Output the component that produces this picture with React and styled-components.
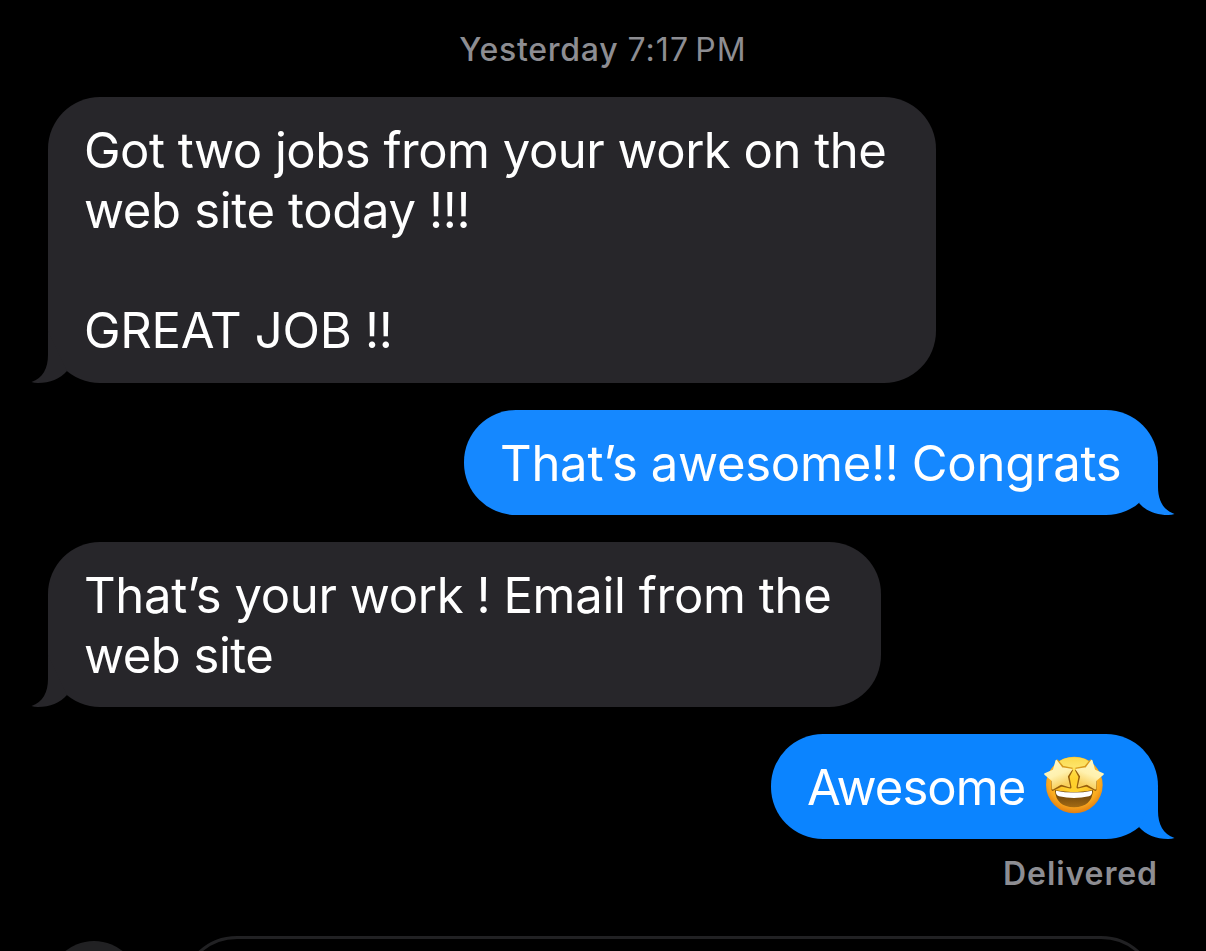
import React from 'react';
import styled, { createGlobalStyle, css } from 'styled-components';

const GlobalStyle = createGlobalStyle`
  * {
    box-sizing: border-box;
  }

  body {
    margin: 0;
    background: #000;
    font-family: Inter, "Liberation Sans", sans-serif;
  }
`;

const Screen = styled.div`
  display: flex;
  flex-direction: column;
  width: 1206px;
  height: 951px;
  padding: 30px 48px 0;
  overflow: hidden;
  background: #000;
`;

const Timestamp = styled.div`
  height: 40px;
  margin-bottom: 27px;
  color: #8d8d92;
  font-size: 32px;
  line-height: 40px;
  text-align: center;
  white-space: nowrap;
`;

const Day = styled.span`
  font-weight: 500;
  letter-spacing: 0.75px;
`;

const Time = styled.span`
  letter-spacing: 1.1px;
  word-spacing: -4px;
`;

const Thread = styled.div`
  display: flex;
  flex-direction: column;
  gap: 27px;
`;

const Bubble = styled.div`
  position: relative;
  flex: none;
  width: ${props => props.$width}px;
  height: ${props => props.$height}px;
  padding: 24px 36px 0;
  border-radius: 52px;
  color: #fff;
  background: ${props => props.$color};
  ${props => props.$sent && css`
    align-self: flex-end;
  `}
`;

const Line = styled.div`
  display: flex;
  align-items: center;
  height: 60px;
  font-size: 49px;
  line-height: 60px;
  letter-spacing: ${props => props.$spacing || 0}px;
  word-spacing: ${props => props.$wordSpacing || 0}px;
  white-space: pre;
`;

const TailShape = styled.svg`
  position: absolute;
  bottom: 0;
  width: 46px;
  height: 52px;
  ${props => (props.$sent ? 'right: -18px;' : 'left: -18px; transform: scaleX(-1);')}
`;

const Face = styled.svg`
  width: 60px;
  height: 60px;
  margin: -5px 0 0 19px;
`;

const Status = styled.div`
  align-self: flex-end;
  height: 40px;
  margin-top: 15px;
  color: #8d8d92;
  font-size: 32px;
  font-weight: 600;
  line-height: 40px;
  letter-spacing: 0.9px;
`;

const Composer = styled.div`
  display: flex;
  flex: none;
  align-items: flex-start;
  gap: 40px;
  margin-top: 42px;
`;

const AddButton = styled.div`
  width: 92px;
  height: 92px;
  margin-top: 5px;
  border-radius: 50%;
  background: #212123;
`;

const Field = styled.div`
  flex: 1;
  height: 114px;
  border: 3px solid #212123;
  border-radius: 57px;
`;

const Tail = ({ color, sent }) => (
  <TailShape $sent={sent} viewBox="0 0 46 52">
    <path fill={color} d="M28 0V24C28 37 33 47 44.5 51Q42 52 38 52C26 52 16 48 9 40Z" />
  </TailShape>
);

const Star = () => (
  <>
    <path
      d="M84 41L73 62L79 94L52 88L26 101L25 75"
      fill="none"
      stroke="#98600c"
      strokeWidth="7"
      strokeLinejoin="round"
    />
    <path
      d="M37 13L55 34L85 40"
      fill="none"
      stroke="#d99a1c"
      strokeWidth="10"
      strokeLinejoin="round"
    />
    <path
      d="M37 14L53 36L82 41L69 61L76 91L51 83L26 98L25 73L3 54L29 43Z"
      fill="url(#star)"
      stroke="url(#star)"
      strokeWidth="5"
      strokeLinejoin="round"
    />
  </>
);

const StarStruck = () => (
  <Face viewBox="0 0 180 180" role="img" aria-label="Star-struck">
    <defs>
      <radialGradient id="skin" cx="50%" cy="40%" r="62%">
        <stop offset="0.35" stopColor="#ffd02c" />
        <stop offset="0.75" stopColor="#f9a91f" />
        <stop offset="1" stopColor="#e0780f" />
      </radialGradient>
      <linearGradient id="shine" x2="0" y2="1">
        <stop offset="0" stopColor="#fbd94c" />
        <stop offset="0.4" stopColor="#fde468" />
        <stop offset="1" stopColor="#ffdf3e" stopOpacity="0" />
      </linearGradient>
      <linearGradient id="star" x2="0.4" y2="1">
        <stop offset="0" stopColor="#fff9c8" />
        <stop offset="0.6" stopColor="#fff1ae" />
        <stop offset="1" stopColor="#f8cf5c" />
      </linearGradient>
      <linearGradient id="mouth" x2="0" y2="1">
        <stop offset="0" stopColor="#5d3a0b" />
        <stop offset="1" stopColor="#a46b13" />
      </linearGradient>
    </defs>
    <circle cx="91" cy="87" r="85" fill="url(#skin)" />
    <ellipse cx="90" cy="38" rx="58" ry="34" fill="url(#shine)" />
    <Star />
    <g transform="translate(180 0) scale(-1 1)">
      <Star />
    </g>
    <path d="M33 103Q90 114 147 103Q144 153 90 154Q36 153 33 103Z" fill="url(#mouth)" />
    <path d="M36 104Q90 115 144 104Q146 117 135 121Q90 131 45 121Q34 117 36 104Z" fill="#fff" />
  </Face>
);

const messages = [
  {
    width: 888,
    height: 286,
    color: '#27262a',
    lines: [
      { text: 'Got two jobs from your work on the', spacing: -0.49 },
      { text: 'web site today !!!', spacing: -0.35 },
      { text: '' },
      { text: 'GREAT JOB !!', spacing: -0.3 },
    ],
  },
  {
    width: 694,
    height: 105,
    color: '#1588ff',
    sent: true,
    lines: [{ text: 'That’s awesome!! Congrats', spacing: -0.24, wordSpacing: -0.5 }],
  },
  {
    width: 833,
    height: 165,
    color: '#27262a',
    lines: [
      { text: 'That’s your work ! Email from the', spacing: -0.3, wordSpacing: -0.3 },
      { text: 'web site', spacing: -0.5 },
    ],
  },
  {
    width: 387,
    height: 105,
    color: '#0b84ff',
    sent: true,
    lines: [{ text: 'Awesome', spacing: -0.95, emoji: true }],
  },
];

const Message = ({ width, height, color, sent, lines }) => (
  <Bubble $width={width} $height={height} $color={color} $sent={sent}>
    <Tail color={color} sent={sent} />
    {lines.map((line, i) => (
      <Line key={i} $spacing={line.spacing} $wordSpacing={line.wordSpacing}>
        {line.text}
        {line.emoji && <StarStruck />}
      </Line>
    ))}
  </Bubble>
);

const App = () => (
  <>
    <GlobalStyle />
    <Screen>
      <Timestamp>
        <Day>Yesterday</Day> <Time>7:17 PM</Time>
      </Timestamp>
      <Thread>
        {messages.map((message, i) => (
          <Message key={i} {...message} />
        ))}
      </Thread>
      <Status>Delivered</Status>
      <Composer>
        <AddButton />
        <Field />
      </Composer>
    </Screen>
  </>
);

export default App;
